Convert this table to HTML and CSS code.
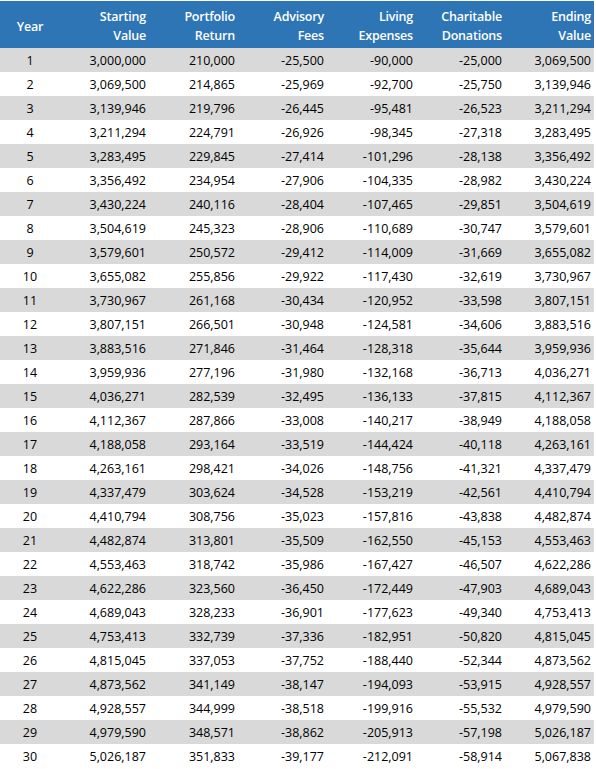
FILE: index.html
```html
<!DOCTYPE html>
<html>
<head>
<meta charset="utf-8">
<link rel="stylesheet" href="styles.css">
</head>
<body>
<table class="proj">
<colgroup><col class="c-year"><col class="c-num"><col class="c-num"><col class="c-num"><col class="c-num"><col class="c-num"><col class="c-num"></colgroup>
<thead>
<tr><th class="year">Year</th><th>Starting<br>Value</th><th>Portfolio<br>Return</th><th>Advisory<br>Fees</th><th>Living<br>Expenses</th><th>Charitable<br>Donations</th><th>Ending<br>Value</th></tr>
</thead>
<tbody>
<tr><td class="year">1</td><td>3,000,000</td><td>210,000</td><td>-25,500</td><td>-90,000</td><td>-25,000</td><td>3,069,500</td></tr>
<tr><td class="year">2</td><td>3,069,500</td><td>214,865</td><td>-25,969</td><td>-92,700</td><td>-25,750</td><td>3,139,946</td></tr>
<tr><td class="year">3</td><td>3,139,946</td><td>219,796</td><td>-26,445</td><td>-95,481</td><td>-26,523</td><td>3,211,294</td></tr>
<tr><td class="year">4</td><td>3,211,294</td><td>224,791</td><td>-26,926</td><td>-98,345</td><td>-27,318</td><td>3,283,495</td></tr>
<tr><td class="year">5</td><td>3,283,495</td><td>229,845</td><td>-27,414</td><td>-101,296</td><td>-28,138</td><td>3,356,492</td></tr>
<tr><td class="year">6</td><td>3,356,492</td><td>234,954</td><td>-27,906</td><td>-104,335</td><td>-28,982</td><td>3,430,224</td></tr>
<tr><td class="year">7</td><td>3,430,224</td><td>240,116</td><td>-28,404</td><td>-107,465</td><td>-29,851</td><td>3,504,619</td></tr>
<tr><td class="year">8</td><td>3,504,619</td><td>245,323</td><td>-28,906</td><td>-110,689</td><td>-30,747</td><td>3,579,601</td></tr>
<tr><td class="year">9</td><td>3,579,601</td><td>250,572</td><td>-29,412</td><td>-114,009</td><td>-31,669</td><td>3,655,082</td></tr>
<tr><td class="year">10</td><td>3,655,082</td><td>255,856</td><td>-29,922</td><td>-117,430</td><td>-32,619</td><td>3,730,967</td></tr>
<tr><td class="year">11</td><td>3,730,967</td><td>261,168</td><td>-30,434</td><td>-120,952</td><td>-33,598</td><td>3,807,151</td></tr>
<tr><td class="year">12</td><td>3,807,151</td><td>266,501</td><td>-30,948</td><td>-124,581</td><td>-34,606</td><td>3,883,516</td></tr>
<tr><td class="year">13</td><td>3,883,516</td><td>271,846</td><td>-31,464</td><td>-128,318</td><td>-35,644</td><td>3,959,936</td></tr>
<tr><td class="year">14</td><td>3,959,936</td><td>277,196</td><td>-31,980</td><td>-132,168</td><td>-36,713</td><td>4,036,271</td></tr>
<tr><td class="year">15</td><td>4,036,271</td><td>282,539</td><td>-32,495</td><td>-136,133</td><td>-37,815</td><td>4,112,367</td></tr>
<tr><td class="year">16</td><td>4,112,367</td><td>287,866</td><td>-33,008</td><td>-140,217</td><td>-38,949</td><td>4,188,058</td></tr>
<tr><td class="year">17</td><td>4,188,058</td><td>293,164</td><td>-33,519</td><td>-144,424</td><td>-40,118</td><td>4,263,161</td></tr>
<tr><td class="year">18</td><td>4,263,161</td><td>298,421</td><td>-34,026</td><td>-148,756</td><td>-41,321</td><td>4,337,479</td></tr>
<tr><td class="year">19</td><td>4,337,479</td><td>303,624</td><td>-34,528</td><td>-153,219</td><td>-42,561</td><td>4,410,794</td></tr>
<tr><td class="year">20</td><td>4,410,794</td><td>308,756</td><td>-35,023</td><td>-157,816</td><td>-43,838</td><td>4,482,874</td></tr>
<tr><td class="year">21</td><td>4,482,874</td><td>313,801</td><td>-35,509</td><td>-162,550</td><td>-45,153</td><td>4,553,463</td></tr>
<tr><td class="year">22</td><td>4,553,463</td><td>318,742</td><td>-35,986</td><td>-167,427</td><td>-46,507</td><td>4,622,286</td></tr>
<tr><td class="year">23</td><td>4,622,286</td><td>323,560</td><td>-36,450</td><td>-172,449</td><td>-47,903</td><td>4,689,043</td></tr>
<tr><td class="year">24</td><td>4,689,043</td><td>328,233</td><td>-36,901</td><td>-177,623</td><td>-49,340</td><td>4,753,413</td></tr>
<tr><td class="year">25</td><td>4,753,413</td><td>332,739</td><td>-37,336</td><td>-182,951</td><td>-50,820</td><td>4,815,045</td></tr>
<tr><td class="year">26</td><td>4,815,045</td><td>337,053</td><td>-37,752</td><td>-188,440</td><td>-52,344</td><td>4,873,562</td></tr>
<tr><td class="year">27</td><td>4,873,562</td><td>341,149</td><td>-38,147</td><td>-194,093</td><td>-53,915</td><td>4,928,557</td></tr>
<tr><td class="year">28</td><td>4,928,557</td><td>344,999</td><td>-38,518</td><td>-199,916</td><td>-55,532</td><td>4,979,590</td></tr>
<tr><td class="year">29</td><td>4,979,590</td><td>348,571</td><td>-38,862</td><td>-205,913</td><td>-57,198</td><td>5,026,187</td></tr>
<tr><td class="year">30</td><td>5,026,187</td><td>351,833</td><td>-39,177</td><td>-212,091</td><td>-58,914</td><td>5,067,838</td></tr>
</tbody>
</table>
</body>
</html>
```
FILE: styles.css
```css
html, body {
  margin: 0;
  padding: 0;
  background: #ffffff;
}
body {
  padding-top: 1px;
  font-family: "Open Sans", Lato, sans-serif;
  font-size: 12.5px;
  color: #000;
}
.proj {
  width: 594px;
  border-collapse: collapse;
  table-layout: fixed;
}
.c-year { width: 60px; }
.c-num { width: 89px; }
.proj th {
  background: #2e75b6;
  color: #ffffff;
  font-weight: 600;
  font-size: 12.5px;
  letter-spacing: -0.2px;
  text-align: right;
  height: 47px;
  padding: 3px 3px 0 0;
  box-sizing: border-box;
  line-height: 19px;
  vertical-align: middle;
}
.proj td {
  height: 24px;
  padding: 2px 3px 0 0;
  box-sizing: border-box;
  text-align: right;
  line-height: 20px;
  vertical-align: middle;
}
.proj .year {
  text-align: center;
  padding-right: 0;
}
.proj tbody tr:nth-child(odd) td {
  background: #d9d9d9;
}
```
